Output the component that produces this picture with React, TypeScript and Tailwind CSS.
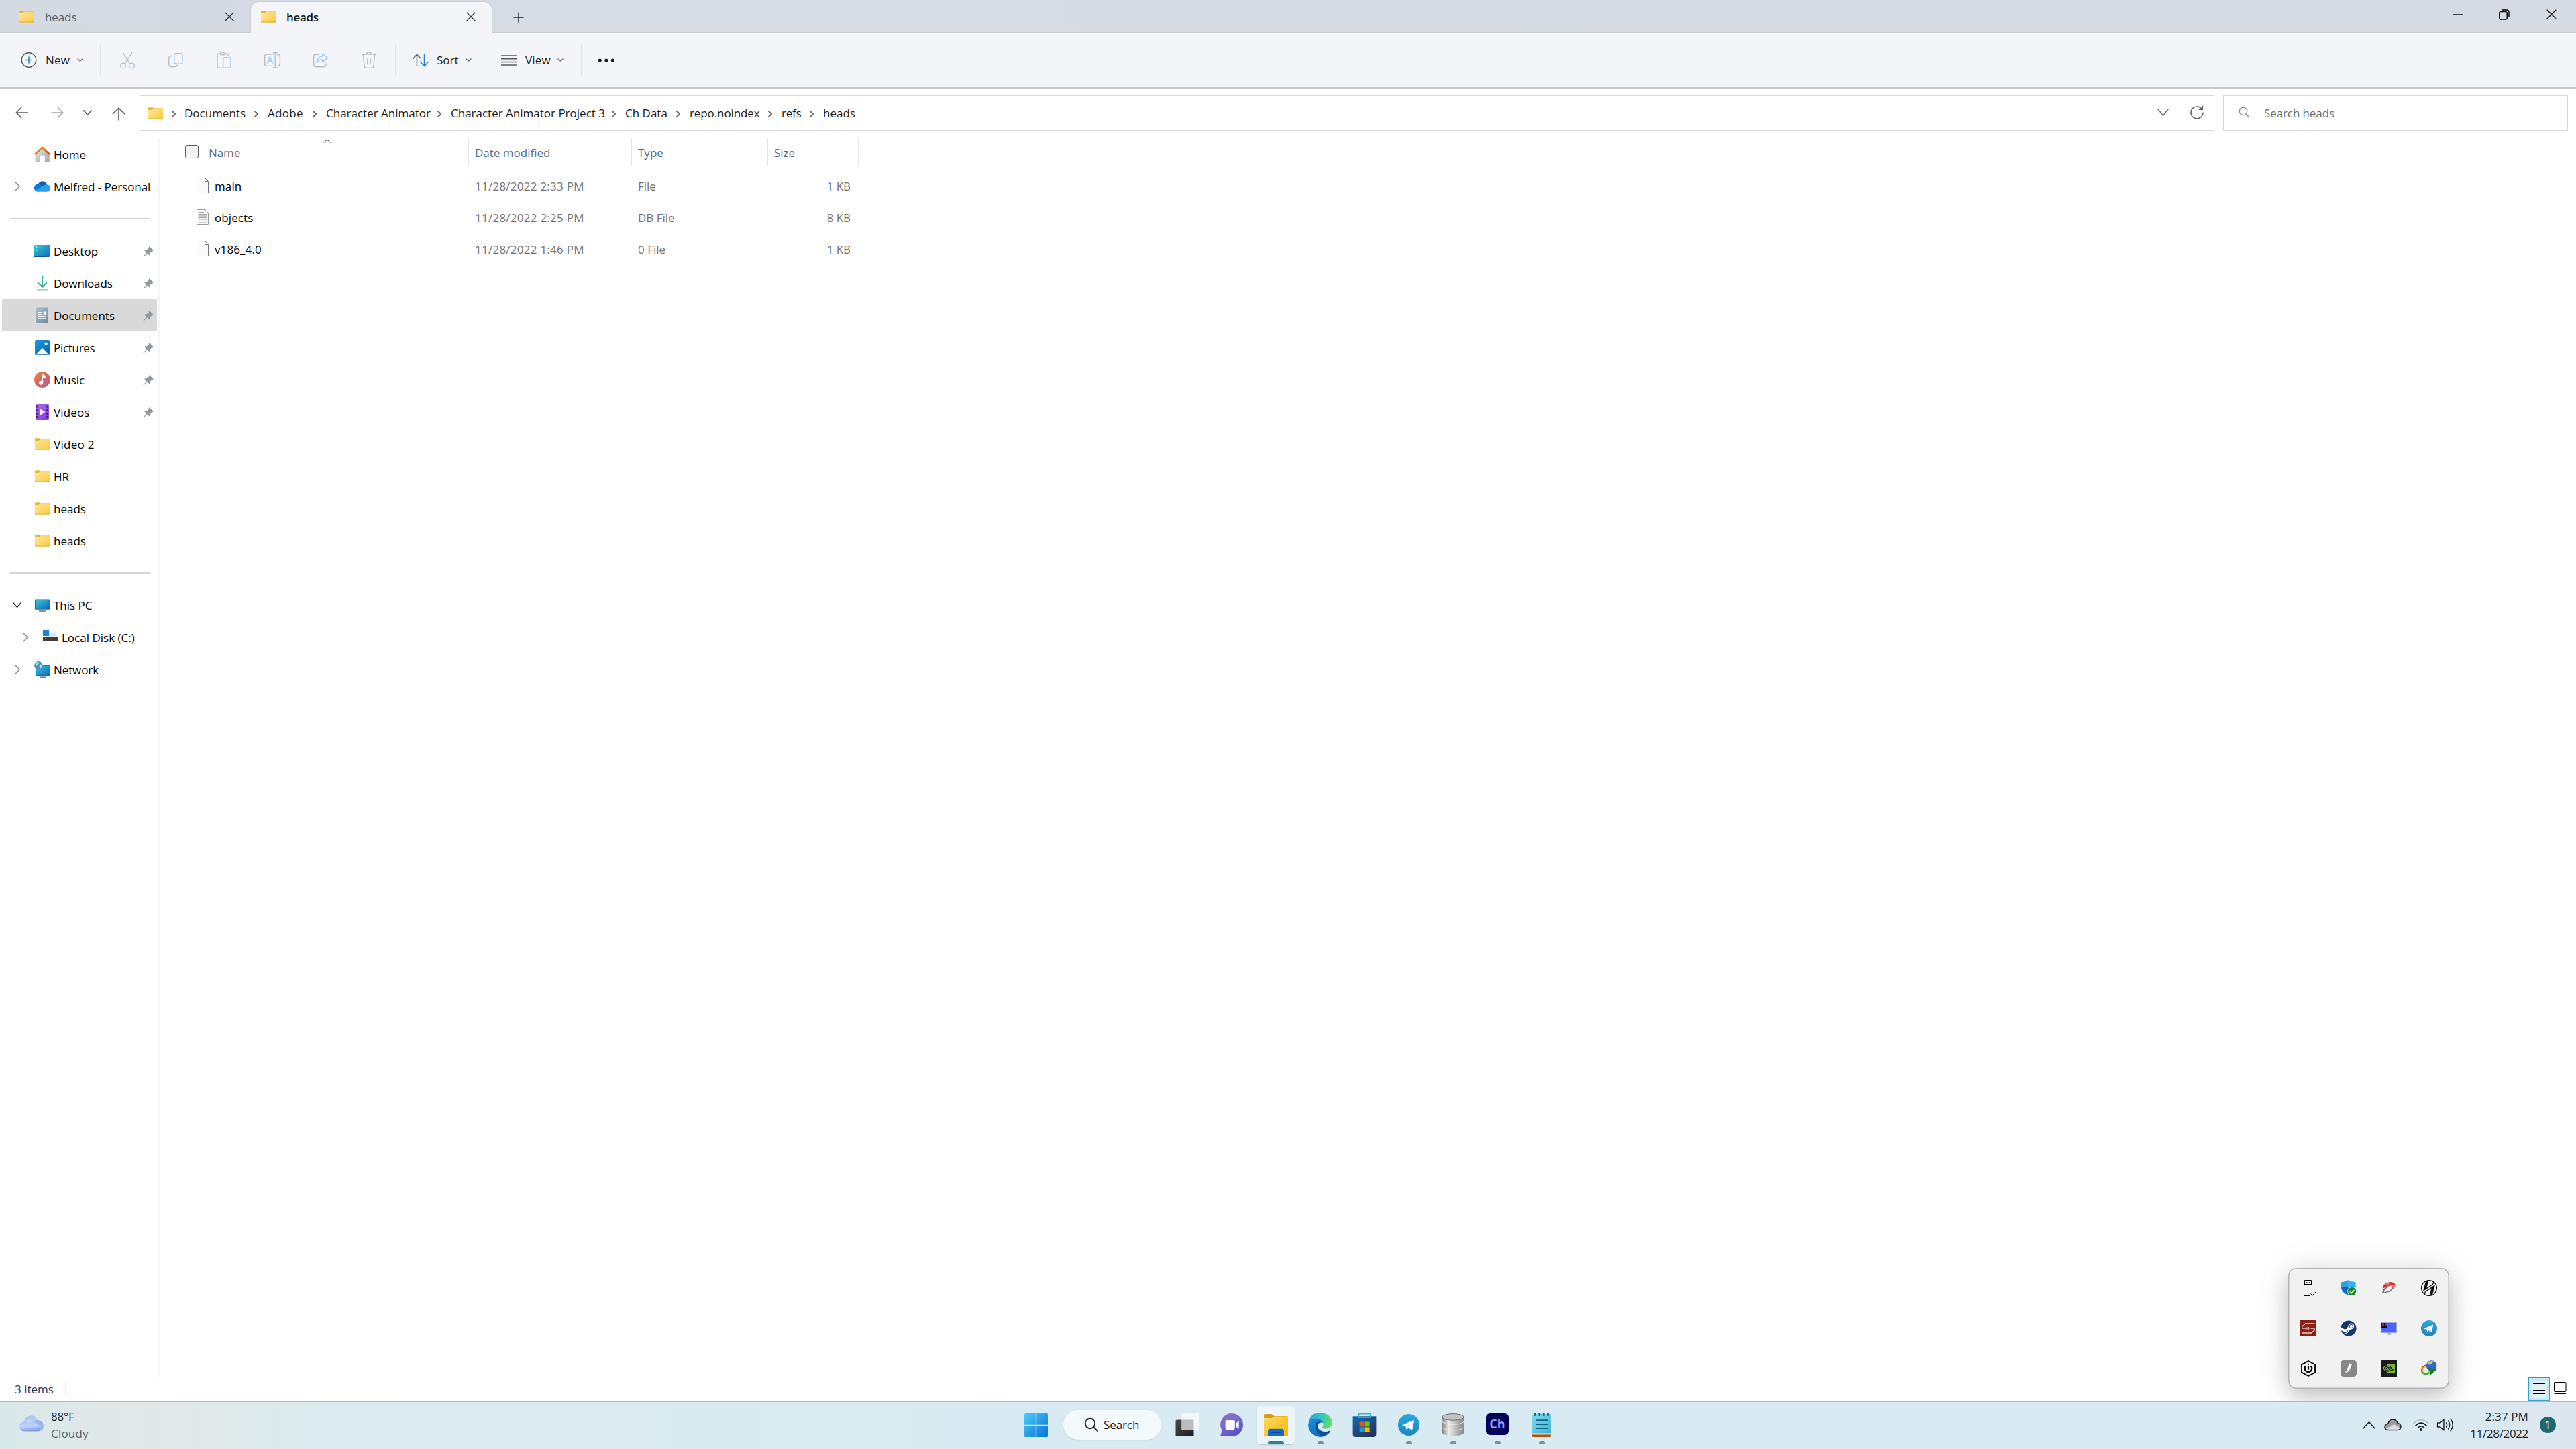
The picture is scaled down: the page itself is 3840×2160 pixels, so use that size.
import type { ReactNode } from "react";
import { FaSteam } from "react-icons/fa";
import { SiNvidia } from "react-icons/si";

/* ---------- shared glyphs ---------- */

function Chevron({
  dir,
  w = 9,
  h = 5,
  className = "text-[#6a6a6a]",
  stroke = 1.2,
}: {
  dir: "down" | "right" | "up";
  w?: number;
  h?: number;
  className?: string;
  stroke?: number;
}) {
  const d = {
    down: `M0.8 0.8 L${w / 2} ${h - 0.8} L${w - 0.8} 0.8`,
    up: `M0.8 ${h - 0.8} L${w / 2} 0.8 L${w - 0.8} ${h - 0.8}`,
    right: `M0.8 0.8 L${w - 0.8} ${h / 2} L0.8 ${h - 0.8}`,
  }[dir];
  return (
    <svg width={w} height={h} viewBox={`0 0 ${w} ${h}`} className={`shrink-0 ${className}`} fill="none">
      <path d={d} stroke="currentColor" strokeWidth={stroke} strokeLinecap="round" strokeLinejoin="round" />
    </svg>
  );
}

function Cross({ size = 14, className = "text-[#333]" }: { size?: number; className?: string }) {
  return (
    <svg width={size} height={size} viewBox="0 0 14 14" className={className}>
      <path d="M0.7 0.7 L13.3 13.3 M13.3 0.7 L0.7 13.3" stroke="currentColor" strokeWidth="1.3" />
    </svg>
  );
}

function Folder() {
  return (
    <svg width="24" height="18" viewBox="0 0 24 18" className="shrink-0">
      <defs>
        <linearGradient id="folder" x1="0" y1="0" x2="1" y2="1">
          <stop offset="0" stopColor="#ffe8a4" />
          <stop offset="1" stopColor="#fdc93d" />
        </linearGradient>
      </defs>
      <path d="M1 1.2 Q1 0.3 2 0.3 H7.6 L9.4 1.6 L8 4.6 H1 Z" fill="#eab330" />
      <path d="M1 4 H6.6 L9 1.7 H22.4 Q23 1.7 23 2.4 V17.5 H1 Z" fill="url(#folder)" />
      <path d="M9 1.7 H23" stroke="#efc04a" strokeWidth="0.8" />
      <path d="M1 17 H23" stroke="#e2ab35" strokeWidth="1" />
    </svg>
  );
}

/* ---------- title bar ---------- */

function TitleBar() {
  return (
    <div className="flex h-[49px] items-stretch bg-[linear-gradient(90deg,#d3dbe1_0%,#d5dae3_12%,#d8dce4_22%,#d5dbe3_60%,#d6dae3_100%)] shadow-[inset_0_-2px_0_#c9ccd0]">
      <div className="flex w-[373px] items-center pl-[27px] text-[#5b5e62]">
        <Folder />
        <span className="ml-[16px] w-[268px] pt-[2px] tracking-[-0.1px]">heads</span>
        <Cross />
      </div>
      <div className="relative mt-[2px] flex w-[361px] items-center rounded-t-[13px] border-x border-t border-[#cbcfd5] bg-[#f3f5f8] pb-[2px] pl-[14px] font-semibold text-[#141414]">
        <Folder />
        <span className="ml-[15px] w-[268px] pt-[2px] tracking-[-0.3px]">heads</span>
        <Cross />
      </div>
      <div className="flex items-center pl-[31px] pt-[2px]">
        <svg width="16" height="16" viewBox="0 0 16 16">
          <path d="M8 0.5 V15.5 M0.5 8 H15.5" stroke="#222" strokeWidth="1.4" />
        </svg>
      </div>
      <div className="ml-auto flex items-center pb-[6px] pr-[29px]">
        <svg width="16" height="16" viewBox="0 0 16 16">
          <path d="M0 8 H15" stroke="#000" strokeWidth="1.4" />
        </svg>
        <svg width="16" height="16" viewBox="0 0 16 16" className="ml-[53px]" fill="none" stroke="#000" strokeWidth="1.4">
          <rect x="0.8" y="3.6" width="11.4" height="11.4" rx="2" />
          <path d="M4 1 H11.5 Q15 1 15 4.5 V12" />
        </svg>
        <Cross size={15} className="ml-[55px] text-black" />
      </div>
    </div>
  );
}

/* ---------- command bar ---------- */

const GREY = "#b9bcc0";
const BLUE = "#9cc8ec";

function CommandSlot({ children }: { children: ReactNode }) {
  return <div className="flex w-[72px] items-center justify-center">{children}</div>;
}

function BarDivider() {
  return <div className="h-[48px] w-[2px] bg-[#e1e3e6]" />;
}

function CommandBar() {
  return (
    <div className="flex h-[83px] items-center border-b-2 border-[#c6c8ce] bg-[#f3f5f8] text-[#1a1a1a]">
      <div className="flex w-[149px] items-center pl-[31px]">
        <svg width="24" height="24" viewBox="0 0 24 24" fill="none">
          <circle cx="12" cy="11.5" r="10.8" stroke="#4b4b4b" strokeWidth="1.3" />
          <path d="M12 6.5 V16.5 M7 11.5 H17" stroke="#1a7fd0" strokeWidth="1.5" />
        </svg>
        <span className="ml-[13px] w-[47px] pt-[1px] tracking-[0.2px]">New</span>
        <Chevron dir="down" />
      </div>
      <BarDivider />
      <div className="flex w-[438px] pl-[3px]">
        <CommandSlot>
          <svg width="24" height="26" viewBox="0 0 24 26" fill="none" strokeWidth="1.4">
            <path d="M5 1 L15.6 18 M19 1 L8.4 18" stroke={GREY} />
            <circle cx="5.6" cy="21" r="3.9" stroke={BLUE} />
            <circle cx="18.4" cy="21" r="3.9" stroke={BLUE} />
          </svg>
        </CommandSlot>
        <CommandSlot>
          <svg width="24" height="24" viewBox="0 0 24 24" fill="none" strokeWidth="1.4">
            <path d="M6 5.5 H5 Q1.7 5.5 1.7 9 V17.5 Q1.7 21.8 6 21.8 H10 Q13.5 21.8 14.2 18.5" stroke={GREY} />
            <rect x="9.7" y="1.7" width="12.3" height="15.5" rx="3" stroke={BLUE} />
          </svg>
        </CommandSlot>
        <CommandSlot>
          <svg width="24" height="26" viewBox="0 0 24 26" fill="none" strokeWidth="1.4">
            <path d="M9 24.3 H3.6 Q2 24.3 2 22.6 V4.5 Q2 3 3.6 3 H6.5 M14 3 H16.6 Q18 3 18 4.5 V6" stroke={GREY} />
            <rect x="6.5" y="1.4" width="7.6" height="3.4" rx="1.6" stroke={GREY} />
            <rect x="10.7" y="9" width="11.3" height="15.3" rx="1.6" stroke={BLUE} />
          </svg>
        </CommandSlot>
        <CommandSlot>
          <svg width="26" height="26" viewBox="0 0 26 26" fill="none" strokeWidth="1.4">
            <path d="M14.5 4 H5 Q1.6 4 1.6 7.4 V18 Q1.6 21.4 5 21.4 H14.5 M20 4 Q24.4 4 24.4 8 V17.6 Q24.4 21.4 20 21.4" stroke={GREY} />
            <path d="M5 17.5 L9.3 7.5 L13.6 17.5 M6.6 14 H12" stroke={BLUE} />
            <path d="M17.2 1.6 V24 M13.8 1.6 H20.6 M13.8 24 H20.6" stroke={BLUE} />
          </svg>
        </CommandSlot>
        <CommandSlot>
          <svg width="24" height="24" viewBox="0 0 24 24" fill="none" strokeWidth="1.4" strokeLinejoin="round">
            <path d="M10 3.2 H5 Q1.6 3.2 1.6 6.6 V18.4 Q1.6 21.8 5 21.8 H16 Q20 21.8 20 18.5 V16.5" stroke={GREY} />
            <path d="M14.8 2 L22.4 8.3 L14.8 14.6 V11 Q9.5 10.5 6 15.6 Q7 6.5 14.8 5.6 Z" stroke={BLUE} />
          </svg>
        </CommandSlot>
        <CommandSlot>
          <svg width="24" height="26" viewBox="0 0 24 26" fill="none" stroke={GREY} strokeWidth="1.4" strokeLinecap="round">
            <path d="M1.5 4 H22.5 M8.5 4 Q8.7 1 12 1 Q15.3 1 15.5 4" />
            <path d="M3.2 4.5 L5.2 22 Q5.5 24.4 7.6 24.4 H16.4 Q18.5 24.4 18.8 22 L20.8 4.5" />
            <path d="M9.8 11 V18.5 M14.2 11 V18.5" />
          </svg>
        </CommandSlot>
      </div>
      <BarDivider />
      <div className="flex w-[275px] items-center pl-[23px]">
        <svg width="26" height="20" viewBox="0 0 26 20" fill="none" strokeWidth="1.5">
          <path d="M7.5 19 V1.6 M1.2 8 L7.5 1.4 L13 7" stroke="#5a5a5a" />
          <path d="M18.5 1 V18.4 M12.3 12 L18.5 18.6 L24.8 12" stroke="#1a7fd0" />
        </svg>
        <span className="ml-[11px] w-[43px] pt-[1px]">Sort</span>
        <Chevron dir="down" />
        <svg width="24" height="18" viewBox="0 0 24 18" className="ml-[44px]">
          <path d="M0 2 H24 M0 6.7 H24 M0 11.4 H24 M0 16 H24" stroke="#5a5a5a" strokeWidth="1.5" />
        </svg>
        <span className="ml-[12px] w-[48px] pt-[1px] tracking-[0.2px]">View</span>
        <Chevron dir="down" />
      </div>
      <BarDivider />
      <svg width="26" height="6" viewBox="0 0 26 6" className="ml-[23px]" fill="#1a1a1a">
        <circle cx="3.3" cy="3" r="2.5" />
        <circle cx="12.8" cy="3" r="2.5" />
        <circle cx="22.3" cy="3" r="2.5" />
      </svg>
    </div>
  );
}

/* ---------- address row ---------- */

const crumbs = [
  { label: "Documents", cls: "w-[91px]" },
  { label: "Adobe", cls: "w-[54px] tracking-[0.3px]" },
  { label: "Character Animator", cls: "w-[153px]" },
  { label: "Character Animator Project 3", cls: "w-[227px]" },
  { label: "Ch Data", cls: "w-[63px]" },
  { label: "repo.noindex", cls: "w-[104px] tracking-[-0.1px]" },
  { label: "refs", cls: "w-[29px] tracking-[-0.2px]" },
  { label: "heads", cls: "w-[48px]" },
];

function AddressRow() {
  return (
    <div className="flex h-[74px] items-start pt-[10px]">
      <div className="flex h-[52px] w-[208px] items-center pl-[23px]">
        <svg width="19" height="18" viewBox="0 0 19 18" fill="none" stroke="#5a5a5a" strokeWidth="1.6" strokeLinecap="round" strokeLinejoin="round">
          <path d="M18 9 H1.5 M8.6 1.6 L1.3 9 L8.6 16.4" />
        </svg>
        <svg width="19" height="18" viewBox="0 0 19 18" className="ml-[34px]" fill="none" stroke="#a3a3a3" strokeWidth="1.6" strokeLinecap="round" strokeLinejoin="round">
          <path d="M1 9 H17.5 M10.4 1.6 L17.7 9 L10.4 16.4" />
        </svg>
        <span className="ml-[29px]">
          <Chevron dir="down" w={13} h={8} stroke={1.7} className="text-[#5c5c5c]" />
        </span>
        <svg width="20" height="20" viewBox="0 0 20 20" className="ml-[30px] mt-[3px]" fill="none" stroke="#5a5a5a" strokeWidth="1.6" strokeLinecap="round" strokeLinejoin="round">
          <path d="M10 19 V1.4 M1.4 9.6 L10 1.2 L18.6 9.6" />
        </svg>
      </div>
      <div className="flex h-[53px] w-[3093px] items-center border border-[#d9d9d9] pl-[11px] text-[#191919]">
        <Folder />
        {crumbs.map((c, i) => (
          <div key={i} className="flex items-center">
            <span className={i === 0 ? "ml-[12px] mr-[13px] pt-[2px]" : "ml-[13px] mr-[14px] pt-[2px]"}>
              <Chevron dir="right" w={6} h={10} stroke={1.9} className="text-[#6b6b6b]" />
            </span>
            <span className={`whitespace-nowrap ${c.cls}`}>{c.label}</span>
          </div>
        ))}
        <div className="ml-auto flex items-center pb-[2px] pr-[14px]">
          <Chevron dir="down" w={17} h={11} stroke={1.4} />
          <svg width="22" height="22" viewBox="0 0 22 22" className="ml-[31px]" fill="none" stroke="#5a5a5a" strokeWidth="1.5">
            <path d="M17.8 5 A9 9 0 1 0 20 10.6" />
            <path d="M19.3 0.8 V6.2 H13.8" />
          </svg>
        </div>
      </div>
      <div className="ml-[13px] flex h-[53px] w-[514px] items-center border border-[#d9d9d9] pl-[22px] text-[#6b6b6b]">
        <svg width="17" height="17" viewBox="0 0 17 17" className="mt-[-3px]" fill="none" stroke="#858b92" strokeWidth="1.4">
          <circle cx="7" cy="7" r="5.8" />
          <path d="M11.2 11.2 L16.2 16.2" />
        </svg>
        <span className="ml-[21px] pt-[1px] tracking-[-0.1px]">Search heads</span>
      </div>
    </div>
  );
}

/* ---------- sidebar ---------- */

function Pin() {
  return (
    <svg width="17" height="17" viewBox="0 0 17 17">
      <path d="M9.8 1.2 L15.8 7 L14.6 8.2 L13.6 8 L11 10.8 Q11.2 13.4 9.6 14.6 L6.4 11.4 L1.2 16.4 L0.5 15.8 L5.4 10.4 L2.2 7.2 Q3.6 5.6 6.2 6 L9 3.4 L8.6 2.3 Z" fill="#90989e" />
    </svg>
  );
}

function HomeIcon() {
  return (
    <svg width="24" height="24" viewBox="0 0 24 24">
      <defs>
        <linearGradient id="wall" x1="0" y1="0" x2="1" y2="1">
          <stop offset="0" stopColor="#e6e6e6" />
          <stop offset="1" stopColor="#a6a6a6" />
        </linearGradient>
        <linearGradient id="roof" x1="0" y1="0" x2="1" y2="1">
          <stop offset="0" stopColor="#f0a030" />
          <stop offset="1" stopColor="#c8480c" />
        </linearGradient>
      </defs>
      <path d="M1.5 11 L12 2 L22.8 11 V22.5 Q22.8 23.5 21.8 23.5 H15.8 V13.8 H8.2 V23.5 H2.5 Q1.5 23.5 1.5 22.5 Z" fill="url(#wall)" />
      <path d="M1 12 L12 1.8 L23 12" fill="none" stroke="url(#roof)" strokeWidth="2.8" strokeLinejoin="round" />
    </svg>
  );
}

function OneDriveIcon() {
  return (
    <svg width="24" height="16" viewBox="0 0 24 16">
      <path d="M6 4.6 Q8 0.3 12.4 0.3 Q17.6 0.5 18.9 5.4 L12 10 Z" fill="#0a5fb4" />
      <path d="M0 10.6 Q0 5 6 4.5 Q9.4 4.6 13 8 L6 15.7 Q0.3 15.8 0 10.6 Z" fill="#0f78cf" />
      <path d="M13 7.5 Q15.6 5 19 5.3 Q24 6 24 10.6 Q23.6 15.7 18.6 15.7 H5.4 Q2.6 15.6 1.2 13.6 Z" fill="#27a2ea" />
    </svg>
  );
}

function DesktopIcon() {
  return (
    <svg width="24" height="18" viewBox="0 0 24 18">
      <defs>
        <linearGradient id="screen" x1="0" y1="0" x2="1" y2="1">
          <stop offset="0" stopColor="#35cbd8" />
          <stop offset="1" stopColor="#1067b8" />
        </linearGradient>
      </defs>
      <rect width="24" height="18" rx="1.2" fill="url(#screen)" />
      <path d="M0 17.2 H24" stroke="#0b4f86" strokeWidth="1.4" />
      <path d="M2.5 2.4 H4.3 V4.2 H2.5 Z M2.5 6.4 H4.3 V8.2 H2.5 Z M19.5 16.5 h1 v1 h-1 Z M21.8 16.5 h1 v1 h-1 Z" fill="#d8fbff" />
    </svg>
  );
}

function DownloadIcon() {
  return (
    <svg width="24" height="24" viewBox="0 0 24 24" fill="none" stroke="#27a98b" strokeWidth="1.8">
      <path d="M12 0.8 V17.8 M5.2 11.2 L12 18 L18.8 11.2" />
      <path d="M4 22.4 H20" />
    </svg>
  );
}

function DocumentIcon() {
  return (
    <svg width="24" height="24" viewBox="0 0 24 24">
      <defs>
        <linearGradient id="doc" x1="0" y1="0" x2="1" y2="1">
          <stop offset="0" stopColor="#a9bfd2" />
          <stop offset="1" stopColor="#6e87a0" />
        </linearGradient>
      </defs>
      <rect x="3" y="0.5" width="18" height="23" rx="1.6" fill="url(#doc)" />
      <path d="M6 7.5 H12 M6 10.6 H12 M6 13.7 H18 M6 16.8 H18" stroke="#fff" strokeWidth="1.2" />
      <rect x="13.8" y="6.5" width="4.4" height="4.6" fill="#fff" />
    </svg>
  );
}

function PictureIcon() {
  return (
    <svg width="24" height="22" viewBox="0 0 24 22">
      <defs>
        <linearGradient id="pic" x1="0" y1="0" x2="1" y2="1">
          <stop offset="0" stopColor="#199ce0" />
          <stop offset="1" stopColor="#0a60b0" />
        </linearGradient>
      </defs>
      <rect x="1" width="22" height="22" rx="2" fill="url(#pic)" />
      <path d="M2.6 21.2 L11 12.6 Q12 11.8 13 12.6 L21.6 21.2 Z" fill="#f3faff" />
      <circle cx="17.6" cy="5.6" r="2.1" fill="#fff" />
    </svg>
  );
}

function MusicIcon() {
  return (
    <svg width="24" height="24" viewBox="0 0 24 24">
      <defs>
        <linearGradient id="music" x1="0" y1="0" x2="1" y2="1">
          <stop offset="0" stopColor="#ec8a4e" />
          <stop offset="0.5" stopColor="#d0695f" />
          <stop offset="1" stopColor="#b060ac" />
        </linearGradient>
      </defs>
      <circle cx="12" cy="12" r="12" fill="url(#music)" />
      <circle cx="10" cy="16.8" r="3" fill="#fff" />
      <path d="M11.5 17 V4.2 H13.4 Q15 6.2 17.8 5.8 V9 Q15.4 9.6 13.2 8.2 V17 Z" fill="#fff" />
    </svg>
  );
}

function VideoIcon() {
  return (
    <svg width="24" height="24" viewBox="0 0 24 24">
      <defs>
        <linearGradient id="video" x1="0" y1="0" x2="0.6" y2="1">
          <stop offset="0" stopColor="#b270ea" />
          <stop offset="1" stopColor="#8440dd" />
        </linearGradient>
      </defs>
      <rect x="2" width="20" height="24" rx="1.4" fill="url(#video)" />
      {[2.5, 7.5, 12.8, 18].map((y) => (
        <g key={y} fill="#44216f">
          <rect x="3" y={y} width="2.8" height="3" />
          <rect x="18.2" y={y} width="2.8" height="3" />
        </g>
      ))}
      <path d="M9 7.2 L16.4 12 L9 16.8 Z" fill="#f6efff" />
    </svg>
  );
}

function PcIcon() {
  return (
    <svg width="24" height="19" viewBox="0 0 24 19">
      <rect x="1" y="0.4" width="22" height="15.4" rx="0.8" fill="#37657c" />
      <rect x="2" y="1.4" width="20" height="13.4" fill="url(#screen)" />
      <path d="M9.4 15.8 H14.6 V17.4 H9.4 Z" fill="#98a4ab" />
      <path d="M7 18 H17" stroke="#5f6b73" strokeWidth="1.4" />
    </svg>
  );
}

function DiskIcon() {
  return (
    <svg width="24" height="18" viewBox="0 0 24 18" className="mb-[5px]">
      <path d="M3 9.6 L9 5 H19 L22.8 9.8 Z" fill="#dfe2e6" />
      <path d="M1 10 H23 V17 H1 Z" fill="#3d3d3d" />
      <path d="M1 16.5 H23" stroke="#8b8b8b" strokeWidth="1" />
      <path d="M1 0 H5 V4 H1 Z M6 0 H10 V4 H6 Z M1 5 H5 V9 H1 Z M6 5 H10 V9 H6 Z" fill="#1785d8" />
      <rect x="4" y="12.2" width="1.8" height="1.8" fill="#59d45e" />
    </svg>
  );
}

function NetworkIcon() {
  return (
    <svg width="24" height="24" viewBox="0 0 24 24">
      <rect x="2" y="5.6" width="22" height="15.4" rx="0.8" fill="#37657c" />
      <rect x="3" y="6.6" width="20" height="13.4" fill="url(#screen)" />
      <path d="M10.4 21 H15.6 V22.4 H10.4 Z" fill="#98a4ab" />
      <path d="M8 23.2 H18" stroke="#5f6b73" strokeWidth="1.4" />
      <circle cx="6.4" cy="6.4" r="6.3" fill="#4c94bd" />
      <path d="M1.6 3.2 Q4 0.5 7.4 1.4 L6 4.6 L3.4 7 Z M8.4 4.2 L12 5.4 Q12 8.6 9.8 10.8 L7.6 8 Z" fill="#b9dced" />
    </svg>
  );
}

type NavItem = {
  label: string;
  icon: ReactNode;
  pinned?: boolean;
  selected?: boolean;
  expand?: "right" | "down";
  nested?: boolean;
  tracking?: string;
};

const account: NavItem[] = [
  { label: "Home", icon: <HomeIcon /> },
  { label: "Melfred - Personal", icon: <OneDriveIcon />, expand: "right", tracking: "tracking-[-0.05px]" },
];

const quickAccess: NavItem[] = [
  { label: "Desktop", icon: <DesktopIcon />, pinned: true, tracking: "tracking-[0.1px]" },
  { label: "Downloads", icon: <DownloadIcon />, pinned: true, tracking: "tracking-[-0.1px]" },
  { label: "Documents", icon: <DocumentIcon />, pinned: true, selected: true },
  { label: "Pictures", icon: <PictureIcon />, pinned: true, tracking: "tracking-[-0.3px]" },
  { label: "Music", icon: <MusicIcon />, pinned: true },
  { label: "Videos", icon: <VideoIcon />, pinned: true, tracking: "tracking-[0.15px]" },
  { label: "Video 2", icon: <Folder />, tracking: "tracking-[0.3px]" },
  { label: "HR", icon: <Folder /> },
  { label: "heads", icon: <Folder /> },
  { label: "heads", icon: <Folder /> },
];

const devices: NavItem[] = [
  { label: "This PC", icon: <PcIcon />, expand: "down" },
  { label: "Local Disk (C:)", icon: <DiskIcon />, expand: "right", nested: true },
  { label: "Network", icon: <NetworkIcon />, expand: "right", tracking: "tracking-[-0.1px]" },
];

function NavRow({ item }: { item: NavItem }) {
  return (
    <div
      className={`ml-[3px] flex h-[48px] w-[231px] items-center rounded-[2px] ${
        item.selected ? "bg-[#d9d9d9]" : ""
      } ${item.nested ? "pl-[12px]" : ""}`}
    >
      <div className="flex w-[48px] shrink-0 items-center pl-[16px]">
        {item.expand === "right" && (
          <span className="ml-[3px]">
            <Chevron dir="right" w={8} h={14} stroke={1.5} className="text-[#8a8a8a]" />
          </span>
        )}
        {item.expand === "down" && <Chevron dir="down" w={13} h={8} stroke={1.6} className="text-[#222]" />}
      </div>
      <div className="flex w-[24px] shrink-0 justify-center">{item.icon}</div>
      <span className={`ml-[5px] whitespace-nowrap pt-[1px] text-black ${item.tracking ?? ""}`}>{item.label}</span>
      {item.pinned && (
        <span className="ml-auto mr-[4px]">
          <Pin />
        </span>
      )}
    </div>
  );
}

function NavDivider() {
  return (
    <div className="flex h-[48px] items-center pl-[15px]">
      <div className="h-[2px] w-[208px] bg-[#d4d4d4]" />
    </div>
  );
}

function Sidebar() {
  return (
    <nav className="h-[1847px] w-[238px] shrink-0 border-r-2 border-[#f5f5f5]">
      {account.map((item) => (
        <NavRow key={item.label} item={item} />
      ))}
      <NavDivider />
      {quickAccess.map((item, i) => (
        <NavRow key={i} item={item} />
      ))}
      <NavDivider />
      {devices.map((item) => (
        <NavRow key={item.label} item={item} />
      ))}
    </nav>
  );
}

/* ---------- file list ---------- */

const files = [
  { name: "main", date: "11/28/2022 2:33 PM", type: "File", size: "1 KB", lined: false },
  { name: "objects", date: "11/28/2022 2:25 PM", type: "DB File", size: "8 KB", lined: true },
  { name: "v186_4.0", date: "11/28/2022 1:46 PM", type: "0 File", size: "1 KB", lined: false },
];

function FileIcon({ lined }: { lined: boolean }) {
  return (
    <svg width="18" height="23" viewBox="0 0 18 23" fill="none" className="mb-[3px]">
      <path d="M0.5 0.5 H12.5 L17.5 5.5 V22.5 H0.5 Z" fill="#fafafa" stroke={lined ? "#9a9a9a" : "#767676"} />
      <path d="M12.5 0.5 V5.5 H17.5" stroke={lined ? "#9a9a9a" : "#767676"} />
      {lined && <path d="M2.5 4.5 H11 M2.5 7.5 H15.5 M2.5 10 H15.5 M2.5 12.5 H15.5 M2.5 15 H15.5 M2.5 17.5 H15.5 M2.5 20 H15.5" stroke="#a0a0a0" />}
    </svg>
  );
}

function FileList() {
  return (
    <div className="w-[1043px]">
      <div className="flex h-[41px] text-[#566b85]">
        <div className="relative flex w-[461px] items-center border-r border-[#e5e5e5] pl-[38px]">
          <div className="mb-[2px] h-[20px] w-[20px] rounded-[3px] border border-[#5f5f5f] bg-[#f3f3f3]" />
          <span className="ml-[15px] pt-[3px] tracking-[-0.1px]">Name</span>
          <span className="absolute left-[244px] top-[1px]">
            <Chevron dir="up" w={11} h={6} stroke={1.1} className="text-[#555]" />
          </span>
        </div>
        <div className="flex w-[243px] items-center border-r border-[#e5e5e5] pl-[9px] pt-[3px]">Date modified</div>
        <div className="flex w-[203px] items-center border-r border-[#e5e5e5] pl-[9px] pt-[3px]">Type</div>
        <div className="flex w-[135px] items-center border-r border-[#e5e5e5] pl-[9px] pt-[3px]">Size</div>
      </div>
      <div className="pt-[7px]">
        {files.map((f) => (
          <div key={f.name} className="flex h-[47px] items-center text-[#737373]">
            <div className="flex w-[470px] items-center pl-[55px] text-black">
              <FileIcon lined={f.lined} />
              <span className="ml-[9px] tracking-[0.1px]">{f.name}</span>
            </div>
            <span className="w-[243px] tracking-[0.25px]">{f.date}</span>
            <span className="w-[203px]">{f.type}</span>
            <span className="w-[114px] text-right tracking-[-0.1px]">{f.size}</span>
          </div>
        ))}
      </div>
    </div>
  );
}

function StatusBar() {
  return (
    <div className="flex h-[35px] items-center">
      <span className="w-[97px] pl-[22px] pt-[1px] text-[#1e395b]">3 items</span>
      <div className="h-[18px] w-px bg-[#ececec]" />
      <div className="ml-auto flex items-center pr-[14px]">
        <div className="flex h-[35px] w-[32px] items-center justify-center border border-[#3d9fc4] bg-[#c5e6f2]">
          <div className="flex h-[26px] w-[24px] items-center justify-center bg-[#e2eff3]">
            <svg width="18" height="17" viewBox="0 0 18 17">
              <path d="M0 0.5 H18 M0 5.5 H18 M0 10.5 H18 M0 15.5 H18" stroke="#000" strokeWidth="1" />
            </svg>
          </div>
        </div>
        <svg width="19" height="19" viewBox="0 0 19 19" className="mb-[3px] ml-[6px]" fill="none" stroke="#000">
          <rect x="0.5" y="0.5" width="17.5" height="14" rx="0.8" />
          <path d="M0.5 17.5 H18" />
        </svg>
      </div>
    </div>
  );
}

/* ---------- tray flyout ---------- */

function Telegram({ size }: { size: number }) {
  return (
    <svg width={size} height={size} viewBox="0 0 32 32">
      <defs>
        <linearGradient id="tg" x1="0" y1="0" x2="0" y2="1">
          <stop offset="0" stopColor="#2da7dc" />
          <stop offset="1" stopColor="#1b86c0" />
        </linearGradient>
      </defs>
      <circle cx="16" cy="16" r="16" fill="url(#tg)" />
      <path d="M6.3 16.2 L23.2 9 Q24.4 8.7 24 10.3 L21.4 22.6 Q21 24.2 19.6 23.3 L15.6 20.4 L13.4 22.6 Q12.6 23.2 12.4 22 L11.4 18.2 L6.6 16.9 Q5.6 16.6 6.3 16.2 Z" fill="#fff" />
      <path d="M12 18.2 L20.4 12.2 L14.2 18.8 L13.2 22.2 Z" fill="#b9dcee" />
    </svg>
  );
}

function UsbIcon() {
  return (
    <svg width="24" height="24" viewBox="0 0 24 24" fill="none" stroke="#000">
      <path d="M6.5 6.5 V0.5 H16.5 V6.5" />
      <path d="M17.5 19 V6.5 H5.5 V23.5 H15" />
      <path d="M9 4 H10.5 M13 4 H14.5" strokeWidth="1.4" />
      <path d="M15.5 20.5 L18 23.3 L23.3 17.6" />
    </svg>
  );
}

function DefenderIcon() {
  return (
    <svg width="24" height="24" viewBox="0 0 24 24">
      <path d="M1 3.4 Q7 3.2 11.8 0 V23 Q1 18.6 1 10.6 Z" fill="#2d9fe6" />
      <path d="M11.8 0 Q16.6 3.2 22.6 3.4 V11 H11.8 Z" fill="#2bb4ef" />
      <path d="M1 11 H11.8 V23 Q2.4 19 1 11 Z" fill="#1266bd" />
      <path d="M11.8 11 H22.6 Q21.6 18.8 11.8 23 Z" fill="#1a82d6" />
      <circle cx="17.2" cy="17" r="7" fill="#fff" />
      <circle cx="17.2" cy="17" r="6.2" fill="#108a1c" />
      <path d="M14 17.2 L16.4 19.6 L20.6 15" fill="none" stroke="#fff" strokeWidth="1.6" />
    </svg>
  );
}

function HelmetIcon() {
  return (
    <svg width="24" height="24" viewBox="0 0 24 24">
      <path d="M2.6 13 Q4 3.6 14 3 Q20.6 3.6 22.4 8 Q16 7.6 10.4 9.4 Q6 11.2 2.6 13 Z" fill="#dc2a26" />
      <path d="M7 5.8 Q12 3.4 16 4.2 L9 8 Z" fill="#f4827c" />
      <path d="M2.6 20 Q1.8 14.4 6 12 Q10 9.8 14 10 Q9 11.4 6.4 14.2 Q4.8 16.4 4.8 18.4 L13 16 L17 12.4 L22 9.4 L17 14.6 L13.4 17.8 Z" fill="#6f6f6f" />
      <path d="M14 10 L22.4 8 L17.6 12 Z" fill="#c44b2d" />
    </svg>
  );
}

function SlashBadgeIcon() {
  return (
    <svg width="24" height="24" viewBox="0 0 24 24" fill="none" stroke="#000">
      <circle cx="12" cy="12" r="11.4" strokeWidth="1.2" />
      <path d="M7 2.6 L11 1.2 L8.2 12.4 L3.6 15.6 Z" fill="#000" strokeWidth="0.4" />
      <path d="M17 21.4 L13 22.8 L15.8 11.6 L20.4 8.4 Z" fill="#000" strokeWidth="0.4" />
      <path d="M3.6 15.8 L17.6 6.6 L18.6 2.8 M20.4 8.2 L6.4 17.4 L5.4 21.2" strokeWidth="1.2" />
    </svg>
  );
}

function SIcon() {
  return (
    <svg width="24" height="24" viewBox="0 0 24 24" fill="none">
      <rect width="24" height="24" fill="#8c1f12" />
      <path d="M21.6 5 H7.6 L2.6 9.6 Q2.4 12 4.4 12 H8" stroke="#e2d2cf" strokeWidth="1.3" />
      <path d="M2.4 19 H16.4 L21.4 14.4 Q21.6 12 19.6 12 H16" stroke="#e2d2cf" strokeWidth="1.3" />
      <path d="M7 12 H17 M9.5 10.4 V13.6 M11 9.4 V14.8 M12.6 10 V14 M14.2 10.8 V13.2" stroke="#d9aca6" strokeWidth="0.9" />
    </svg>
  );
}

function SteamIcon() {
  return (
    <div className="flex h-[24px] w-[24px] items-center justify-center rounded-full bg-white">
      <FaSteam size={24} className="text-[#14396b]" />
    </div>
  );
}

function FpsIcon() {
  return (
    <div className="relative h-[24px] w-[24px]">
      <svg width="24" height="24" viewBox="0 0 24 24">
        <rect x="1" y="3.6" width="22.6" height="15" fill="#4765ff" stroke="#9aa6d6" strokeWidth="0.6" />
        <path d="M10.5 18.8 H14.5 V20.6 H16 V21.6 H9 V20.6 H10.5 Z" fill="#a2a2a2" />
      </svg>
      <span className="absolute left-[1px] top-[4px] h-[7px] w-[9px] bg-black text-center font-['Liberation_Mono',monospace] text-[7px] font-bold leading-[7px] text-[#e22fd0]">
        60
      </span>
    </div>
  );
}

function HexPowerIcon() {
  return (
    <svg width="24" height="24" viewBox="0 0 24 24" fill="none" stroke="#000">
      <path d="M12 1 L22 6.4 V17.6 L12 23 L2 17.6 V6.4 Z" strokeWidth="1.8" strokeLinejoin="round" />
      <path d="M8 8.6 A5.2 5.2 0 1 0 16 8.6" strokeWidth="2.4" />
      <path d="M12 8.6 V13.8" strokeWidth="2.2" />
      <circle cx="12" cy="5.8" r="0.7" fill="#000" strokeWidth="1" />
    </svg>
  );
}

function PenIcon() {
  return (
    <svg width="24" height="24" viewBox="0 0 24 24">
      <rect width="24" height="24" rx="4.5" fill="#878787" />
      <path d="M13.4 4.4 L17 5.8 L12.8 15.4 L9.4 14 Z M9 14.8 L12 16 L9.4 18 L8 18.8 Z" fill="#fff" />
      <path d="M6.6 18 L7.8 15" stroke="#fff" />
    </svg>
  );
}

function NvidiaIcon() {
  return (
    <div className="flex h-[24px] w-[24px] items-center justify-center bg-[#1b1b1b]">
      <SiNvidia size={18} className="text-[#76b93a]" />
    </div>
  );
}

function IdmIcon() {
  return (
    <svg width="24" height="24" viewBox="0 0 24 24" fill="none">
      <ellipse cx="8" cy="13.2" rx="7.2" ry="5.8" stroke="#d43a2e" strokeWidth="1.8" transform="rotate(-24 8 13.2)" />
      <ellipse cx="8.4" cy="14" rx="6" ry="4.8" stroke="#f2cf2e" strokeWidth="1.8" transform="rotate(-24 8.4 14)" />
      <path d="M0.8 15 Q2 20.6 9 20.2 L13 18" stroke="#34a844" strokeWidth="2" />
      <circle cx="15.6" cy="8" r="7.8" fill="#3468c8" />
      <path d="M11 2.8 Q15 -0.4 19 1.8 L16.6 4.4 L12.4 6.4 L9.4 5 Z" fill="#c4d07c" />
      <path d="M9.4 11 L23.8 13.6 L19.6 16.4 L12.6 22.8 L13.4 17 Z" fill="#10801a" />
    </svg>
  );
}

const trayIcons = [
  <UsbIcon />,
  <DefenderIcon />,
  <HelmetIcon />,
  <SlashBadgeIcon />,
  <SIcon />,
  <SteamIcon />,
  <FpsIcon />,
  <Telegram size={24} />,
  <HexPowerIcon />,
  <PenIcon />,
  <NvidiaIcon />,
  <IdmIcon />,
];

function TrayFlyout() {
  return (
    <div className="absolute left-[3411px] top-[1890px] grid h-[180px] w-[240px] grid-cols-4 grid-rows-3 rounded-[12px] bg-[#f1f1f1] shadow-[inset_0_0_0_1.5px_#b4b4b4,0_12px_32px_rgba(0,0,0,0.22),0_0_60px_rgba(0,0,0,0.07)]">
      {trayIcons.map((icon, i) => (
        <div key={i} className="flex items-center justify-center">
          {icon}
        </div>
      ))}
    </div>
  );
}

/* ---------- taskbar ---------- */

function TaskSlot({ children, running, active }: { children: ReactNode; running?: boolean; active?: boolean }) {
  return (
    <div className="relative flex h-[70px] w-[66px] items-center justify-center pb-[2px]">
      {active && <div className="absolute left-[5px] top-[6px] h-[57px] w-[56px] rounded-[6px] bg-[#edf5f9] shadow-[0_1px_2px_rgba(0,0,0,0.15)]" />}
      <div className="relative">{children}</div>
      {active && <div className="absolute left-[21px] top-[58px] h-[5px] w-[24px] rounded-full bg-[#2a848e]" />}
      {running && <div className="absolute left-[29px] top-[58px] h-[5px] w-[9px] rounded-full bg-[#7f8e95]" />}
    </div>
  );
}

function WindowsLogo() {
  return (
    <svg width="35" height="35" viewBox="0 0 35 35">
      <defs>
        <linearGradient id="win" gradientUnits="userSpaceOnUse" x1="0" y1="0" x2="35" y2="35">
          <stop offset="0" stopColor="#4ccbfb" />
          <stop offset="1" stopColor="#0873d4" />
        </linearGradient>
      </defs>
      <path d="M1.5 0 H16.8 V16.8 H0 V1.5 Q0 0 1.5 0 Z M18.2 0 H33.5 Q35 0 35 1.5 V16.8 H18.2 Z M0 18.2 H16.8 V35 H1.5 Q0 35 0 33.5 Z M18.2 18.2 H35 V33.5 Q35 35 33.5 35 H18.2 Z" fill="url(#win)" />
    </svg>
  );
}

function TaskViewIcon() {
  return (
    <svg width="36" height="34" viewBox="0 0 36 34">
      <defs>
        <linearGradient id="tv" x1="0" y1="0" x2="1" y2="1">
          <stop offset="0" stopColor="#4a4a4a" />
          <stop offset="1" stopColor="#1c1c1c" />
        </linearGradient>
      </defs>
      <rect x="0.5" y="9.5" width="27" height="24.5" rx="1.6" fill="url(#tv)" />
      <rect x="9.5" y="0" width="26.5" height="24.6" rx="1.6" fill="#f4f6f7" />
      <rect x="9.5" y="9.5" width="18" height="15.1" fill="#bcbcbc" />
    </svg>
  );
}

function ChatIcon() {
  return (
    <svg width="34" height="34" viewBox="0 0 34 34">
      <defs>
        <linearGradient id="chat" x1="0" y1="0" x2="0.5" y2="1">
          <stop offset="0" stopColor="#8d6fc0" />
          <stop offset="0.5" stopColor="#7a6ad0" />
          <stop offset="1" stopColor="#5a54c8" />
        </linearGradient>
      </defs>
      <path d="M17.5 0 A16.8 17 0 1 1 11 32.8 L1.6 34 Q0 34 0.4 32.4 L2.6 25.6 A16.8 17 0 0 1 17.5 0 Z" fill="url(#chat)" />
      <rect x="7.6" y="10" width="14.2" height="14" rx="2.4" fill="#fff" />
      <path d="M23.4 15 L26.4 11.8 Q27.6 11 27.6 12.6 V21.6 Q27.6 23 26.4 22.2 L23.4 19 Z" fill="#fff" />
    </svg>
  );
}

function ExplorerIcon() {
  return (
    <svg width="36" height="33" viewBox="0 0 36 33">
      <defs>
        <linearGradient id="exp" x1="0" y1="0" x2="1" y2="1">
          <stop offset="0" stopColor="#ffd75e" />
          <stop offset="1" stopColor="#f9b810" />
        </linearGradient>
      </defs>
      <path d="M0 6 V1.8 Q0 0 1.8 0 H11.4 L15.4 3 H34.4 Q36 3 36 4.6 V8 Z" fill="#dc9a10" />
      <path d="M0 6.4 H11 L15.4 3.6 H36 V32 H0 Z" fill="url(#exp)" />
      <path d="M6 32 V25.4 Q6 21.8 9.6 21.8 H26.4 Q30 21.8 30 25.4 V32 Z" fill="#0d6fc8" />
      <path d="M10.6 27.2 H25" stroke="#0b4688" strokeWidth="1.4" />
    </svg>
  );
}

function EdgeIcon() {
  return (
    <svg width="36" height="36" viewBox="0 0 36 36">
      <defs>
        <linearGradient id="edgeTop" x1="0" y1="0.3" x2="1" y2="0.6">
          <stop offset="0" stopColor="#2ba5dc" />
          <stop offset="0.5" stopColor="#32c6c4" />
          <stop offset="1" stopColor="#68e05a" />
        </linearGradient>
        <linearGradient id="edgeLeft" x1="0" y1="0" x2="0.6" y2="1">
          <stop offset="0" stopColor="#1a8fd8" />
          <stop offset="1" stopColor="#0f6cc4" />
        </linearGradient>
      </defs>
      <path d="M0.6 15 Q3 0 18 0 Q30 0 35 10.4 Q37.4 19 31.6 22.4 Q26.4 24.8 22 23 Q20.4 22 21.8 20 Q24 15.4 20 12 Q12 6.4 4.8 11 Q1.6 13 0.6 15 Z" fill="url(#edgeTop)" />
      <path d="M0 18 Q1 9 11 8.6 Q20 9 22.4 15 Q18 13.4 15.4 16 Q11.6 20.6 15 26 Q18 32 23 35.2 Q17 37 10.4 34 Q0.6 29 0 18 Z" fill="url(#edgeLeft)" />
      <path d="M11.4 15 Q8.6 23.6 14 29.4 Q19.6 35.4 24 34.8 Q30.4 32.4 33.2 27.2 Q33.6 26 32.2 26.6 Q24 30 18 26 Q12.4 22 14.6 16.6 Q17 13.4 20.6 14 Q16 12 11.4 15 Z" fill="#104f9c" />
    </svg>
  );
}

function StoreIcon() {
  return (
    <svg width="36" height="36" viewBox="0 0 36 36">
      <defs>
        <linearGradient id="store" x1="0" y1="0" x2="0.6" y2="1">
          <stop offset="0" stopColor="#1469b4" />
          <stop offset="1" stopColor="#22365e" />
        </linearGradient>
      </defs>
      <path d="M9.4 8 V2.6 Q9.4 1.6 10.4 1.6 H25.6 Q26.6 1.6 26.6 2.6 V8" fill="none" stroke="#35b4e2" strokeWidth="1.8" />
      <path d="M0.6 5.2 H35.4 V31.4 Q35.4 36 31 36 H5 Q0.6 36 0.6 31.4 Z" fill="url(#store)" />
      <path d="M9.4 5 V7 H26.6 V5" fill="none" stroke="#35b4e2" strokeWidth="1.6" />
      <path d="M10.6 13.4 H17.6 V20.4 H10.6 Z" fill="#f1511b" />
      <path d="M18.6 13.4 H25.6 V20.4 H18.6 Z" fill="#80b900" />
      <path d="M10.6 21.4 H17.6 V28.4 H10.6 Z" fill="#00a4ef" />
      <path d="M18.6 21.4 H25.6 V28.4 H18.6 Z" fill="#ffb900" />
    </svg>
  );
}

function DatabaseIcon() {
  return (
    <svg width="34" height="34" viewBox="0 0 34 34">
      <defs>
        <linearGradient id="db" x1="0" y1="0" x2="1" y2="0">
          <stop offset="0" stopColor="#7e7e7e" />
          <stop offset="0.3" stopColor="#ececec" />
          <stop offset="1" stopColor="#858585" />
        </linearGradient>
      </defs>
      <path d="M0.6 22 V29 Q5 33.8 17 33.8 Q29 33.8 33.4 29 V22 Z" fill="url(#db)" />
      <path d="M0.6 13 V20.6 Q5 25 17 25 Q29 25 33.4 20.6 V13 Z" fill="url(#db)" stroke="#f2f2f2" strokeWidth="0.8" />
      <path d="M0.6 5 V12 Q5 16.4 17 16.4 Q29 16.4 33.4 12 V5 Z" fill="url(#db)" stroke="#f2f2f2" strokeWidth="0.8" />
      <ellipse cx="17" cy="5.4" rx="16.2" ry="4.8" fill="#c2c2c2" stroke="#6e6e6e" />
    </svg>
  );
}

function NotepadIcon() {
  return (
    <svg width="30" height="36" viewBox="0 0 30 36">
      <defs>
        <linearGradient id="note" x1="0" y1="0" x2="1" y2="1">
          <stop offset="0" stopColor="#7fdcee" />
          <stop offset="1" stopColor="#3fb2d2" />
        </linearGradient>
      </defs>
      <path d="M1 31 H29 V34.4 Q29 36 27.4 36 H2.6 Q1 36 1 34.4 Z" fill="#b0530f" />
      <path d="M1 29.6 H29 V32.4 H1 Z" fill="#f3efe9" />
      <path d="M1 4.4 Q1 2 3 2 H27 Q29 2 29 4.4 V30.4 H1 Z" fill="url(#note)" />
      {[5.4, 11.8, 18.2, 24.6].map((x) => (
        <rect key={x} x={x - 1.5} y="0" width="3" height="5" rx="1.5" fill="#166b88" />
      ))}
      <path d="M6 11.2 H24 M6 17 H24 M6 23 H24" stroke="#0f6486" strokeWidth="1.8" />
    </svg>
  );
}

function WeatherIcon() {
  return (
    <svg width="36" height="24" viewBox="0 0 36 24" className="mb-[3px]">
      <defs>
        <linearGradient id="cloud" x1="0" y1="0" x2="0.2" y2="1">
          <stop offset="0" stopColor="#9dbcf6" />
          <stop offset="0.6" stopColor="#c2d5fb" />
          <stop offset="1" stopColor="#7f9fe4" />
        </linearGradient>
        <linearGradient id="cloud2" x1="0" y1="1" x2="1" y2="0">
          <stop offset="0" stopColor="#d5e3fd" />
          <stop offset="1" stopColor="#6d90e0" />
        </linearGradient>
      </defs>
      <path d="M6.6 10 Q8 0.6 17.6 0.3 Q25 0.6 27.2 7 L22 18 H8 Z" fill="url(#cloud)" />
      <path d="M7.4 9.2 Q13.4 9.6 14.6 14 Q17.6 7.4 26 7 Q35.6 7.6 36 15.4 Q35.4 23 28 23.4 H7.6 Q0.4 23 0 16.4 Q0.4 9.8 7.4 9.2 Z" fill="url(#cloud)" />
      <path d="M20 10.4 Q23 7 27 7 Q35.6 7.8 36 15.4 Q35.4 22 30 23 Q32 14 20 10.4 Z" fill="url(#cloud2)" opacity="0.7" />
    </svg>
  );
}

function SystemTray() {
  return (
    <div className="flex items-center pb-[2px] text-[#1b1f23]">
      <Chevron dir="up" w={19} h={11} stroke={1.4} className="text-[#1b1b1b]" />
      <svg width="26" height="18" viewBox="0 0 26 18" className="ml-[13px]">
        <path d="M5.4 16.6 Q1 16.2 1 11.8 Q1.4 7.6 5.8 7.2 Q7.4 1 13.2 1 Q18.6 1.4 20 6.4 Q25 7 25 11.8 Q24.6 16.4 20.4 16.6 Z" fill="#9c9c9c" stroke="#222" strokeWidth="1.5" />
        <path d="M3 14.6 L14.6 8 L23.6 13.4 Q22.4 15.8 20 15.8 H6 Q4 15.8 3 14.6 Z" fill="#dcdcdc" />
      </svg>
      <svg width="24" height="19" viewBox="0 0 24 19" className="ml-[17px]" fill="none" strokeWidth="1.6" strokeLinecap="round">
        <path d="M1 6.6 Q12 -3.6 23 6.6" stroke="#b4bfc6" />
        <path d="M4 9.8 Q12 2.4 20 9.8 M7.4 13 Q12 9 16.6 13" stroke="#1b1b1b" />
        <circle cx="12" cy="16" r="1.9" fill="#1b1b1b" />
      </svg>
      <svg width="26" height="22" viewBox="0 0 26 22" className="ml-[11px]" fill="none" stroke="#1b1b1b" strokeWidth="1.4" strokeLinecap="round" strokeLinejoin="round">
        <path d="M1.6 8 H5.6 L11 3 V19 L5.6 14 H1.6 Z" />
        <path d="M14.6 8 Q16.6 11 14.6 14 M17.6 5 Q21.6 11 17.6 17 M21 2 Q27.4 11 21 20" />
      </svg>
      <div className="ml-[11px] w-[100px] text-right leading-[25px]">
        <div className="whitespace-nowrap tracking-[0.1px]">2:37 PM</div>
        <div className="whitespace-nowrap tracking-[-0.35px]">11/28/2022</div>
      </div>
      <div className="ml-[17px] flex h-[24px] w-[24px] items-center justify-center rounded-full bg-[#1f6873] text-[16px] text-white">1</div>
    </div>
  );
}

function Taskbar() {
  return (
    <div className="relative z-10 flex h-[72px] items-center border-t-2 border-[#adb7bc] bg-[linear-gradient(90deg,#d8e9e9_0%,#e3e8e8_5%,#dcebee_12%,#d9ebf2_40%,#d9ebf2_92%,#dde6ef_100%)]">
      <div className="flex w-[1511px] items-center pb-[3px] pl-[29px]">
        <WeatherIcon />
        <div className="ml-[11px] leading-[25px]">
          <div className="tracking-[-0.2px] text-[#1b1f23]">88°F</div>
          <div className="tracking-[0.2px] text-[#5b6265]">Cloudy</div>
        </div>
      </div>
      <TaskSlot>
        <WindowsLogo />
      </TaskSlot>
      <div className="mb-[2px] ml-[8px] mr-[6px] flex h-[44px] w-[146px] items-center rounded-full bg-[#f4fafc] pl-[31px] text-[#16191b] shadow-[0_1px_2px_rgba(0,0,0,0.12)]">
        <svg width="22" height="22" viewBox="0 0 22 22" fill="none" stroke="#1b1b1b" strokeWidth="1.9">
          <circle cx="9" cy="9" r="7.2" />
          <path d="M14.2 14.2 L20.6 20.6" />
        </svg>
        <span className="ml-[7px] tracking-[-0.1px]">Search</span>
      </div>
      <TaskSlot>
        <TaskViewIcon />
      </TaskSlot>
      <TaskSlot>
        <ChatIcon />
      </TaskSlot>
      <TaskSlot active>
        <ExplorerIcon />
      </TaskSlot>
      <TaskSlot running>
        <EdgeIcon />
      </TaskSlot>
      <TaskSlot>
        <StoreIcon />
      </TaskSlot>
      <TaskSlot running>
        <Telegram size={32} />
      </TaskSlot>
      <TaskSlot running>
        <DatabaseIcon />
      </TaskSlot>
      <TaskSlot running>
        <div className="mb-[3px] flex h-[32px] w-[34px] items-center justify-center rounded-[6px] bg-[#00005b] pb-[2px] text-[18px] font-bold text-[#9999ff]">
          Ch
        </div>
      </TaskSlot>
      <TaskSlot running>
        <NotepadIcon />
      </TaskSlot>
      <div className="ml-auto pr-[30px]">
        <SystemTray />
      </div>
    </div>
  );
}

export default function App() {
  return (
    <div className="relative h-[2160px] w-[3840px] overflow-hidden bg-white font-['Open_Sans','Noto_Sans',sans-serif] text-[17px] leading-[24px]">
      <TitleBar />
      <CommandBar />
      <AddressRow />
      <div className="flex">
        <Sidebar />
        <FileList />
      </div>
      <StatusBar />
      <TrayFlyout />
      <Taskbar />
    </div>
  );
}
